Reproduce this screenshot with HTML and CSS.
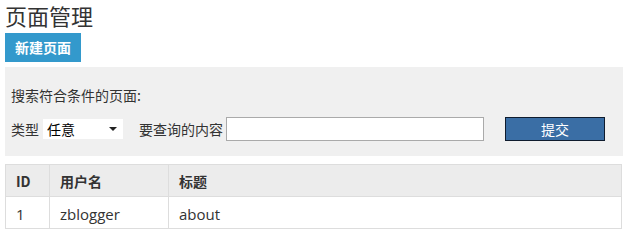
FILE: index.html
```html
<!DOCTYPE html>
<html lang="zh-CN">
<head>
<meta charset="utf-8">
<title>页面管理</title>
<link rel="stylesheet" href="styles.css">
</head>
<body>
<h1 class="title">页面管理</h1>
<a class="btn-new" href="#">新建页面</a>
<div class="search">
  <p class="search-label">搜索符合条件的页面:</p>
  <form class="search-row">
    <label class="lbl">类型</label>
    <span class="select-wrap">
      <select class="sel"><option>任意</option></select>
    </span>
    <label class="lbl lbl-q">要查询的内容</label>
    <input class="inp" type="text">
    <button class="submit" type="button">提交</button>
  </form>
</div>
<table class="tbl">
  <thead>
    <tr><th class="c-id">ID</th><th class="c-user">用户名</th><th>标题</th></tr>
  </thead>
  <tbody>
    <tr><td>1</td><td>zblogger</td><td>about</td></tr>
  </tbody>
</table>
</body>
</html>
```

FILE: styles.css
```css
html, body {
  margin: 0;
  padding: 0;
  background: #fff;
}
body {
  padding: 0 1px 0 5px;
  font-family: "Open Sans", "Noto Sans CJK SC", sans-serif;
  font-size: 14px;
  color: #333;
}
.title {
  margin: 0;
  line-height: 30px;
  font-size: 22px;
  font-weight: normal;
  color: #333;
  font-family: "Noto Sans CJK SC", sans-serif;
}
.btn-new {
  display: inline-block;
  margin-top: 3px;
  width: 76px;
  height: 29px;
  line-height: 29px;
  text-align: center;
  background: #3399cc;
  color: #fff;
  font-weight: bold;
  font-size: 14px;
  text-decoration: none;
  vertical-align: top;
  font-family: "Noto Sans CJK SC", sans-serif;
}
.search {
  margin-top: 5px;
  margin-right: -1px;
  background: #f0f0f0;
  padding: 16px 6px 15px;
  font-family: "Noto Sans CJK SC", sans-serif;
  font-size: 14px;
}
.search-label {
  margin: 0 0 10px;
  height: 24px;
  line-height: 24px;
}
.search-row {
  display: flex;
  align-items: center;
  height: 24px;
  margin: 0;
}
.lbl {
  line-height: 24px;
}
.select-wrap {
  position: relative;
  margin-left: 4px;
  width: 80px;
  height: 20px;
  background: #fff;
}
.select-wrap::after {
  content: "";
  position: absolute;
  right: 6px;
  top: 8px;
  border-left: 4px solid transparent;
  border-right: 4px solid transparent;
  border-top: 4px solid #222;
  pointer-events: none;
}
.sel {
  appearance: none;
  -webkit-appearance: none;
  border: 0;
  background: transparent;
  width: 100%;
  height: 20px;
  padding: 0 0 0 4px;
  margin: 0;
  font-family: "Noto Sans CJK SC", sans-serif;
  font-size: 14px;
  color: #000;
  outline: none;
}
.lbl-q {
  margin-left: 16px;
}
.inp {
  margin: 0 0 0 3px;
  box-sizing: border-box;
  width: 258px;
  height: 24px;
  border: 1px solid #aaa;
  background: #fff;
  padding: 0 4px;
}
.submit {
  margin-left: 21px;
  box-sizing: border-box;
  width: 100px;
  height: 24px;
  background: #3a6ea5;
  border: 1px solid #0f1c2e;
  color: #fff;
  font-family: "Noto Sans CJK SC", sans-serif;
  font-size: 14px;
  padding: 0;
  line-height: 20px;
}
.tbl {
  margin-top: 8px;
  width: 617px;
  border-collapse: collapse;
  font-size: 15px;
}
.tbl th, .tbl td {
  border: 1px solid #ddd;
  height: 32px;
  padding: 0 10px;
  text-align: left;
  box-sizing: border-box;
}
.tbl th {
  background: #ececec;
  font-weight: bold;
  font-family: "Noto Sans CJK SC", sans-serif;
  font-size: 14px;
}
.tbl td {
  font-family: "Open Sans", "Noto Sans CJK SC", sans-serif;
  padding-top: 2px;
}
.c-id { width: 44px; }
.c-user { width: 119px; }
```
